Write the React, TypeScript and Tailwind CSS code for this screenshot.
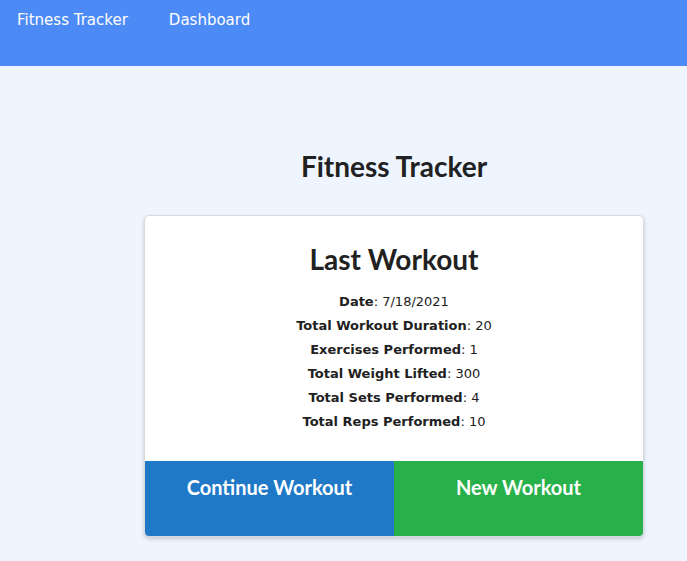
export default function App() {
  const stats = [
    { label: 'Date', value: '7/18/2021' },
    { label: 'Total Workout Duration', value: '20' },
    { label: 'Exercises Performed', value: '1' },
    { label: 'Total Weight Lifted', value: '300' },
    { label: 'Total Sets Performed', value: '4' },
    { label: 'Total Reps Performed', value: '10' },
  ]

  return (
    <div className="min-h-screen bg-[#eef5ff] font-['DejaVu_Sans',sans-serif] text-[#212121]">
      {/* Top nav */}
      <nav className="h-[66px] bg-[#4c8bf5] flex items-start gap-[41px] pl-[17px] pt-[9px] text-white text-[15px]">
        <a href="#">Fitness Tracker</a>
        <a href="#">Dashboard</a>
      </nav>

      <main className="flex flex-col items-center pl-[101px] pt-[83px]">
        <h1 className="font-['Lato',sans-serif] font-bold text-[28px] leading-[34px]">Fitness Tracker</h1>

        <div className="mt-[32px] w-[500px] bg-white rounded-[5px] border border-[#d6d9de] shadow-[0_2px_4px_rgba(0,0,0,0.18)] overflow-hidden">
          <div className="flex flex-col items-center pt-[25px] pb-[27px]">
            <h2 className="font-['Lato',sans-serif] font-bold text-[28px] leading-[36px] mb-[13px]">Last Workout</h2>
            {stats.map((s) => (
              <p key={s.label} className="text-[13px] leading-[24px]">
                <span className="font-bold">{s.label}</span>: {s.value}
              </p>
            ))}
          </div>
          <div className="flex font-['Lato',sans-serif] font-bold text-[20px] text-white">
            <button className="flex-1 h-[75px] bg-[#2079c7] pt-[11px] flex justify-center items-start">Continue Workout</button>
            <button className="flex-1 h-[75px] bg-[#28b04a] pt-[11px] flex justify-center items-start">New Workout</button>
          </div>
        </div>
      </main>
    </div>
  )
}
